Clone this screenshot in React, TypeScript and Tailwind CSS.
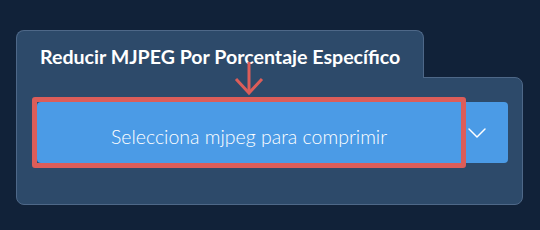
import { ChevronDown } from "lucide-react";

export default function App() {
  return (
    <div className="w-[540px] h-[230px] bg-[#112239] pt-[30px] pl-4 font-['Lato','Liberation_Sans',sans-serif]">
      <div className="w-[507px] flex flex-col">
        {/* Tab */}
        <div className="relative z-10 -mb-px w-[408px] h-[48px] rounded-t-lg border border-b-0 border-[#4e6888] bg-[#2d4a6a] px-[23px] pt-[16px]">
          <h2 className="text-[19.6px] leading-none font-bold text-white whitespace-nowrap">
            Reducir MJPEG Por Porcentaje Específico
          </h2>
        </div>

        {/* Panel */}
        <div className="h-[128px] rounded-b-lg rounded-tr-lg border border-[#4e6888] bg-[#2d4a6a] pl-5 pr-[14px] pt-6">
          <div className="relative flex h-[61px]">
            <button className="w-[424px] h-full pt-2 bg-[#4b9be6] rounded-l text-white text-[19.5px] font-light">
              Selecciona mjpeg para comprimir
            </button>
            <button className="flex-1 h-full bg-[#4b9be6] rounded-r flex items-center justify-start">
              <ChevronDown className="w-8 h-8 text-white" strokeWidth={1.1} />
            </button>

            {/* highlight */}
            <div className="absolute -left-[5px] -top-[5px] w-[434px] h-[71px] rounded-[3px] border-[5px] border-[#dc5d59] pointer-events-none" />
            <svg
              className="absolute z-20 left-[196px] -top-[41px]"
              width="32"
              height="36"
              viewBox="0 0 32 36"
              fill="none"
              stroke="#dc5d59"
              strokeWidth="3"
            >
              <path d="M16 1 V32" />
              <path d="M3 18 L16 32 L29 18" />
            </svg>
          </div>
        </div>
      </div>
    </div>
  );
}
